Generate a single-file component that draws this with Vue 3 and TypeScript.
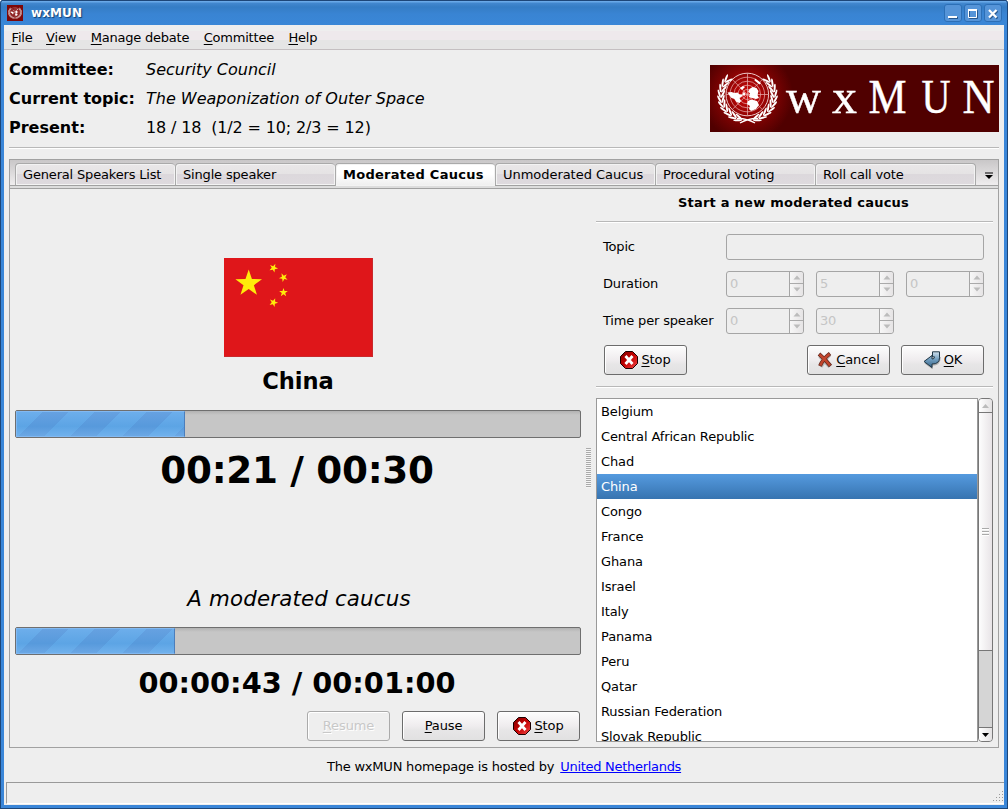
<script setup lang="ts">
const menus: string[] = ['File', 'View', 'Manage debate', 'Committee', 'Help']
const tabs: string[] = ['General Speakers List', 'Single speaker', 'Moderated Caucus', 'Unmoderated Caucus', 'Procedural voting', 'Roll call vote']
const activeTab = 'Moderated Caucus'
const countries: string[] = ['Belgium', 'Central African Republic', 'Chad', 'China', 'Congo', 'France', 'Ghana', 'Israel', 'Italy', 'Panama', 'Peru', 'Qatar', 'Russian Federation', 'Slovak Republic']
const selected = 'China'
const durations: string[] = ['0', '5', '0']
const speakerTimes: string[] = ['0', '30']

const star = (cx: number, cy: number, r: number, turn: number): string =>
  Array.from({ length: 10 }, (_, i) => {
    const a = ((turn + i * 36 - 90) * Math.PI) / 180
    const d = i % 2 ? r * 0.39 : r
    return `${(cx + d * Math.cos(a)).toFixed(2)},${(cy + d * Math.sin(a)).toFixed(2)}`
  }).join(' ')

const stars: string[] = [
  star(24.7, 25.5, 14, 0),
  star(49.5, 10, 4.6, 24),
  star(59.5, 19.5, 4.6, 46),
  star(59.5, 34.5, 4.6, 0),
  star(49.5, 44.5, 4.6, 22),
]

const leaves = Array.from({ length: 10 }, (_, i) => {
  const deg = 112 + i * 12.3
  const a = (deg * Math.PI) / 180
  return { x: 30.5 + 26.5 * Math.cos(a), y: 23.5 + 24.5 * Math.sin(a), turn: deg + 90 }
})
const banner = [
  { c: 'w', x: 76, w: 35 },
  { c: 'x', x: 122, w: 25 },
  { c: 'M', x: 158.5, w: 38 },
  { c: 'U', x: 211.5, w: 29 },
  { c: 'N', x: 252.5, w: 32 },
]
</script>

<template>
  <div class="window">
    <svg class="defs" width="0" height="0">
      <defs>
        <radialGradient id="glow" gradientUnits="userSpaceOnUse" cx="37" cy="30" r="46">
          <stop offset="0" stop-color="#d00808" /><stop offset=".3" stop-color="#a80505" /><stop offset=".65" stop-color="#780202" /><stop offset="1" stop-color="#500000" />
        </radialGradient>
        <linearGradient id="red" x1="0" y1="0" x2="1" y2="1"><stop offset="0" stop-color="#7c0000" /><stop offset=".5" stop-color="#c60000" /><stop offset="1" stop-color="#ef4b4b" /></linearGradient>
        <linearGradient id="blue" x1="0" y1="0" x2="0" y2="1"><stop offset="0" stop-color="#cfe0ec" /><stop offset=".5" stop-color="#6f9cbe" /><stop offset="1" stop-color="#376488" /></linearGradient>
        <symbol id="emblem" viewBox="0 0 61 52">
          <g fill="none" stroke="#e9b4b4" stroke-width=".7">
            <circle cx="30.3" cy="22.500" r="21.300" stroke="#f6dcdc" stroke-width=".9" /><circle cx="30.3" cy="22.500" r="17.300" /><circle cx="30.3" cy="22.500" r="13.300" /><circle cx="30.3" cy="22.500" r="9.300" /><circle cx="30.3" cy="22.500" r="5" />
            <path d="M30.500 1.200v42.500M9 22.500h43M15.300 7.500l30 30M45.300 7.500l-30 30" />
          </g>
          <g fill="#fff">
            <path d="M10.500 20.500l4-.5 3 1 3-.5 2 2 3 .5-1 2-2 1 1.500 3-1.500 2-3-1-2-3-3-1-2-2.500zM32.500 17l3-2 4 1 2 3-1 4 1.500 3-3 1-4-1-3-1 1-4-2-1zM31 29l3-1.500 6 1.500 2 4-3 4-5 2-2-2 1-3-3-2zM23 16l3-2 2 1-3 3zM38 6.500l6 4.500-1.500 1.500-5-4zM26.500 20l2 1-1 3-2-1z" />
            <g v-for="(l, i) in leaves" :key="i">
              <g :transform="`translate(${l.x} ${l.y}) rotate(${l.turn})`"><ellipse cx="0" cy="-2" rx="4.300" ry="1" transform="rotate(-22)" /><ellipse cx="0" cy="2" rx="4.300" ry="1" transform="rotate(22)" /></g>
              <g :transform="`translate(61 0) scale(-1 1) translate(${l.x} ${l.y}) rotate(${l.turn})`"><ellipse cx="0" cy="-2" rx="4.300" ry="1" transform="rotate(-22)" /><ellipse cx="0" cy="2" rx="4.300" ry="1" transform="rotate(22)" /></g>
            </g>
          </g>
          <path d="M20 46.500q9-.5 18 4.500M41 46.500q-9-.5-18 4.500" fill="none" stroke="#fff" stroke-width="1.400" />
        </symbol>
        <symbol id="stop" viewBox="0 0 18 18">
          <path d="M5.500.5h7l5 5v7l-5 5h-7l-5-5v-7z" fill="url(#red)" stroke="#1a0000" />
          <path d="M5.500 5l7 8M12.500 5l-7 8" stroke="#fff" stroke-width="2.800" />
        </symbol>
      </defs>
    </svg>

    <header class="titlebar">
      <svg class="appicon" width="16" height="16" viewBox="0 0 16 16"><rect width="16" height="16" fill="#7d0808" /><use href="#emblem" x="1" y="1.500" width="14" height="13" /></svg>
      <span class="title">wxMUN</span>
      <span class="winbtn"><svg width="18" height="18"><path d="M5 14h9" stroke="#28578c" stroke-width="2" /><path d="M4 13h9" stroke="#fff" stroke-width="2" /></svg></span>
      <span class="winbtn"><svg width="18" height="18"><path d="M5.500 6.500h8v8h-8z" fill="none" stroke="#28578c" /><path d="M4.500 5.500h8v8h-8z" fill="none" stroke="#fff" /><path d="M4 6h9" stroke="#fff" stroke-width="2" /></svg></span>
      <span class="winbtn"><svg width="18" height="18"><path d="M6 7l7.500 7.500M13.500 7l-7.500 7.500" stroke="#28578c" stroke-width="2" /><path d="M5 6l7.500 7.500M12.500 6l-7.500 7.500" stroke="#fff" stroke-width="2.200" /></svg></span>
    </header>

    <nav class="menubar">
      <span v-for="m in menus" :key="m"><u>{{ m[0] }}</u>{{ m.slice(1) }}</span>
    </nav>

    <section class="summary">
      <div class="facts">
        <b>Committee:</b><i>Security Council</i>
        <b>Current topic:</b><i>The Weaponization of Outer Space</i>
        <b>Present:</b><span class="count">18 / 18&nbsp; (1/2 = 10; 2/3 = 12)</span>
      </div>
      <svg class="banner" width="289" height="67">
        <rect width="289" height="67" fill="#500000" /><rect width="90" height="67" fill="url(#glow)" />
        <use href="#emblem" x="7" y="7" width="61" height="52" />
        <text v-for="b in banner" :key="b.c" :x="b.x" y="47.500" :textLength="b.w" lengthAdjust="spacingAndGlyphs">{{ b.c }}</text>
      </svg>
    </section>
    <div class="rule outer"></div>

    <main class="notebook">
      <div class="tabs">
        <div v-for="t in tabs" :key="t" class="tab" :class="{ active: t === activeTab }">{{ t }}</div>
        <svg class="more" width="8" height="8"><path d="M0 1h8" stroke="#000" /><path d="M0 3h8l-4 4z" /></svg>
      </div>
      <div class="tabbase"></div>
      <div class="page">
        <section class="timers">
          <svg class="flag" width="149" height="99"><rect width="149" height="99" fill="#df161a" /><path d="M0 98.500h148.500v-98.500" fill="none" stroke="#c9292c" /><polygon v-for="s in stars" :key="s" :points="s" fill="#ffec0a" /></svg>
          <div class="country">China</div>
          <div class="bar"><div class="fill first"></div></div>
          <div class="time big">00:21 / 00:30</div>
          <div class="caucus">A moderated caucus</div>
          <div class="bar"><div class="fill second"></div></div>
          <div class="time small">00:00:43 / 00:01:00</div>
          <div class="actions">
            <button class="btn off" disabled><span><u>R</u>esume</span></button>
            <button class="btn"><span><u>P</u>ause</span></button>
            <button class="btn"><svg width="18" height="18"><use href="#stop" /></svg><span><u>S</u>top</span></button>
          </div>
        </section>
        <div class="sash"><div class="grip"></div></div>
        <section class="side">
          <h2>Start a new moderated caucus</h2>
          <div class="rule"></div>
          <div class="form">
            <label>Topic</label><div class="field"></div>
            <label>Duration</label>
            <div class="spins"><div v-for="(d, i) in durations" :key="i" class="spin"><span>{{ d }}</span><svg width="14" height="23"><path d="M0 11.500h14" stroke="#aaa" /><path d="M3.500 7.500h7l-3.500-4zM3.500 15.500h7l-3.500 4z" fill="#bcbcbc" /></svg></div></div>
            <label>Time per speaker</label>
            <div class="spins"><div v-for="(d, i) in speakerTimes" :key="i" class="spin"><span>{{ d }}</span><svg width="14" height="23"><path d="M0 11.500h14" stroke="#aaa" /><path d="M3.500 7.500h7l-3.500-4zM3.500 15.500h7l-3.500 4z" fill="#bcbcbc" /></svg></div></div>
          </div>
          <div class="formbtns">
            <button class="btn"><svg width="18" height="18"><use href="#stop" /></svg><span><u>S</u>top</span></button>
            <button class="btn cancel"><svg width="16" height="16" viewBox="0 0 16 16"><path d="M2.500 4.500q4 4 10 10.500M13 3q-5 5-9 12" fill="none" stroke="#999" stroke-width="3" opacity=".6" /><path d="M2 2q7 6 11.500 12M13 1.500Q6 7 3 14" fill="none" stroke="#63291e" stroke-width="3.900" /><path d="M2.500 2.500q6.500 5.500 10.500 11M12.500 2Q6 7 3.300 13.500" fill="none" stroke="#c2452d" stroke-width="2.400" /></svg><span><u>C</u>ancel</span></button>
            <button class="btn ok"><svg width="18" height="18" viewBox="0 0 18 18"><path d="M2 12l7 5v-3c5 0 8-2 8-8" fill="none" stroke="#aaa" stroke-width="1.500" /><path d="M9.500.8h7v6q0 6.200-7.500 6.200v3.500l-8-6 8-6v3.500q2.500.2 2.500-2.200h-2z" fill="url(#blue)" stroke="#1e3545" /></svg><span><u>O</u>K</span></button>
          </div>
          <div class="rule"></div>
          <div class="listbox">
            <ul><li v-for="c in countries" :key="c" :class="{ sel: c === selected }">{{ c }}</li></ul>
            <div class="scroll">
              <div class="arrow"><svg width="7" height="4"><path d="M0 4h7L3.500 0z" fill="#bbb" /></svg></div>
              <div class="thumb"><i></i></div>
              <div class="trough"></div>
              <div class="arrow down"><svg width="7" height="4"><path d="M0 0h7L3.500 4z" /></svg></div>
            </div>
          </div>
        </section>
      </div>
    </main>

    <footer class="host">The wxMUN homepage is hosted by <a>United Netherlands</a></footer>
    <div class="status">
      <svg width="12" height="12"><g fill="#999"><path d="M10 0h1v1h-1zM10 3h1v1h-1zM7 3h1v1h-1zM10 6h1v1h-1zM7 6h1v1h-1zM4 6h1v1h-1zM10 9h1v1h-1zM7 9h1v1h-1zM4 9h1v1h-1zM1 9h1v1h-1z" /></g></svg>
    </div>
  </div>
</template>

<style>
body { overflow: hidden; background: #fff; }
</style>
<style scoped>
* { box-sizing: border-box; }
.window { width: 1008px; height: 809px; display: flex; flex-direction: column; padding: 0 4px 5px; background: #eee; border-radius: 4px 4px 0 0; box-shadow: inset 1px 0 #1d4678, inset -1px 0 #1d4678, inset 0 -1px #1d4678, inset 4px 0 #3a86d8, inset -4px 0 #3a86d8, inset 0 -4px #3a86d8; font: 13px/17px "DejaVu Sans", sans-serif; letter-spacing: -.17px; color: #000; }
.defs { position: absolute; }
.titlebar { flex: none; height: 25px; margin: 0 -4px; padding: 1px 6px 0 7px; border-radius: 4px 4px 0 0; display: flex; align-items: center; background: linear-gradient(#1d4678 0 1px, #69a9e8 1px 2px, #4388cf 3px, #357dc5 7px, #3984d3 14px, #3a87d7 25px); box-shadow: inset 1px 0 #1d4678, inset -1px 0 #1d4678; }
.title { flex: 1; margin-left: 8px; font: bold 12px/16px "DejaVu Sans", sans-serif; letter-spacing: .1px; color: #fff; text-shadow: 1px 1px 1px #123e70; }
.winbtn { width: 18px; height: 18px; margin-left: 2px; border: 1px solid #2c6fb6; border-radius: 3px; background: #5594d8; }
.winbtn svg { display: block; margin: -1px; }
.menubar { flex: none; height: 25px; display: flex; gap: 14.5px; padding: 4px 0 0 7.5px; background: linear-gradient(#eee 0 6px, #eee9ec 6px 15px, #e5e5e5 15px); border-bottom: 1px solid #c4bfc1; }
.menubar span:nth-child(2) { margin-left: -1px; }
.menubar span:nth-child(n + 3) { letter-spacing: -.22px; }
u { text-underline-offset: 2px; text-decoration-thickness: 1px; }
.summary { flex: none; height: 97px; padding: 5px 5px 0; display: flex; justify-content: space-between; font-size: 16px; letter-spacing: 0; }
.facts { display: grid; grid-template-columns: 137px auto; grid-auto-rows: 29px; line-height: 29px; white-space: nowrap; }
.count { letter-spacing: -.14px; }
.banner { margin-top: 10px; font-family: "Liberation Serif", serif; font-size: 48px; fill: #fff; }
.banner text { stroke: #fff; stroke-width: .4px; }
.rule { flex: none; height: 2px; border-top: 1px solid #b8b8b8; border-bottom: 1px solid #fff; }
.outer { margin: 0 5px; }
.notebook { flex: none; height: 589px; margin: 10px 5px 0; border: 1px solid #a1a1a1; }
.tabs { display: flex; height: 26px; padding: 3px 0 0 5px; background: linear-gradient(#c9c7c8, #efedee); border-bottom: 1px solid #a1a1a1; }
.tab { width: 160px; height: 22px; padding: 3px 0 0 7px; border: 1px solid #aaa; border-right: 0; border-bottom: 0; border-radius: 4px 4px 0 0; background: linear-gradient(#eae8e9, #e5e3e4 48%, #dcd8dc 50%, #dedade); box-shadow: inset 1px 1px #f3f3f3, inset -1px -1px #f3f3f3; white-space: nowrap; line-height: 16px; }
.tab:nth-child(4) { letter-spacing: -.04px; }
.tab:nth-child(6) { width: 161px; border-right: 1px solid #aaa; }
.tab.active { font-weight: bold; letter-spacing: .28px; height: 23px; background: linear-gradient(#fff 45%, #eee); }
.more { margin: 9px 0 0 9px; }
.tabbase { height: 3px; background: #ddd; border-bottom: 1px solid #a1a1a1; }
.page { display: flex; height: 558px; padding: 0 5px; }
.timers { width: 566px; display: flex; flex-direction: column; align-items: center; padding-top: 69px; }
.flag { flex: none; display: block; margin-left: 1px; }
.country { height: 53px; line-height: 48px; font-size: 22.6px; font-weight: bold; letter-spacing: 0; }
.bar { width: 566px; height: 28px; flex: none; border: 1px solid #6f6f6f; border-radius: 2px; background: linear-gradient(#b2b2b2, #c6c6c6 4px); }
.fill { height: 26px; border: 1px solid #82b9f2; border-right-color: #4b7ebc; background: linear-gradient(#7bbaf033, #4397da55 60%, #7bbaf066), repeating-linear-gradient(135deg, #69abea 0 18px, #619bdd 18px 36.700px); }
.first { width: 169px; }
.second { width: 159px; }
.time { font-weight: bold; white-space: pre; }
.big { height: 133px; line-height: 64px; font-size: 37.33px; letter-spacing: -.3px; padding-right: 2px; }
.caucus { height: 56px; line-height: 56px; font-size: 21.33px; font-style: italic; letter-spacing: .18px; padding-left: 2px; }
.small { height: 56px; line-height: 56px; font-size: 28.8px; letter-spacing: 0; padding-right: 2px; }
.actions { align-self: flex-end; display: flex; gap: 12px; padding-right: 1px; }
.btn { width: 83px; height: 30px; padding: 0 0 1px; display: flex; align-items: center; justify-content: center; gap: 3px; border: 1px solid #6c6c6c; border-radius: 3px; background: linear-gradient(#fdfdfd, #efecee 50%, #e7e6e7 65%, #e1e1e1); box-shadow: inset 1px 1px #fff; color: #000; font: 13px/17px "DejaVu Sans", sans-serif; letter-spacing: -.1px; }
.btn svg { flex: none; }
.off { color: #c8c8c8; border-color: #aaa; background: #eee; text-shadow: 1px 1px #fff; }
.sash { width: 15px; padding: 259px 4px 0 5px; }
.grip { width: 5px; height: 40px; background: repeating-linear-gradient(#aaa 0 1px, #f5f5f5 1px 2px); }
.side { width: 397px; display: flex; flex-direction: column; }
h2 { margin: 0; height: 32px; padding-right: 2px; line-height: 27px; font-size: 13px; letter-spacing: .24px; text-align: center; }
.form { display: grid; grid-template-columns: 123px 258px; row-gap: 11px; grid-auto-rows: 26px; padding: 11px 0 0 7px; line-height: 26px; }
.field, .spin { height: 26px; border: 1px solid #a5a5a5; border-radius: 3px; }
.spins { display: flex; gap: 12px; }
.spin { width: 78px; padding-left: 3px; display: flex; justify-content: space-between; color: #c5c5c5; line-height: 24px; }
.spin svg { height: 24px; border-left: 1px solid #a5a5a5; background: linear-gradient(90deg, #f7f7f7, #e6e4e5); border-radius: 0 3px 3px 0; }
.formbtns { display: flex; height: 52px; padding: 11px 9px 0 8px; }
.cancel { margin-left: auto; }
.ok { margin-left: 11px; }
.listbox { display: flex; height: 344px; margin-top: 10px; }
ul { list-style: none; margin: 0; padding: 0; width: 382px; border: 1px solid #999; background: #fff; overflow: hidden; letter-spacing: -.13px; }
li { height: 25px; line-height: 25px; padding-left: 4px; }
.sel { color: #fff; background: linear-gradient(#559adf, #3774b0); }
.scroll { width: 15px; display: flex; flex-direction: column; border: 1px solid #777; border-radius: 4px; overflow: hidden; background: #d5d5d5; }
.arrow { height: 14px; flex: none; display: flex; justify-content: center; align-items: center; border-bottom: 1px solid #777; background: linear-gradient(90deg, #fff, #e4e2e3); }
.thumb { height: 238px; display: flex; align-items: center; justify-content: center; border-bottom: 1px solid #777; background: linear-gradient(90deg, #fdfdfd, #e8e4e7); }
.thumb i { width: 7px; height: 8px; background: repeating-linear-gradient(#aaa 0 1px, #fff 1px 2px, #eee 2px 3px); }
.trough { flex: 1; }
.down { border-bottom: 0; border-top: 1px solid #777; }
.host { height: 34px; flex: none; line-height: 37px; text-align: center; letter-spacing: -.2px; }
a { color: #00f; text-decoration: underline; margin-left: 2px; letter-spacing: -.29px; }
.status { height: 22px; flex: none; margin: 0 0 0 2px; border: 1px solid #999; border-right: 0; border-bottom-color: #fff; display: flex; justify-content: flex-end; align-items: flex-end; }
</style>
